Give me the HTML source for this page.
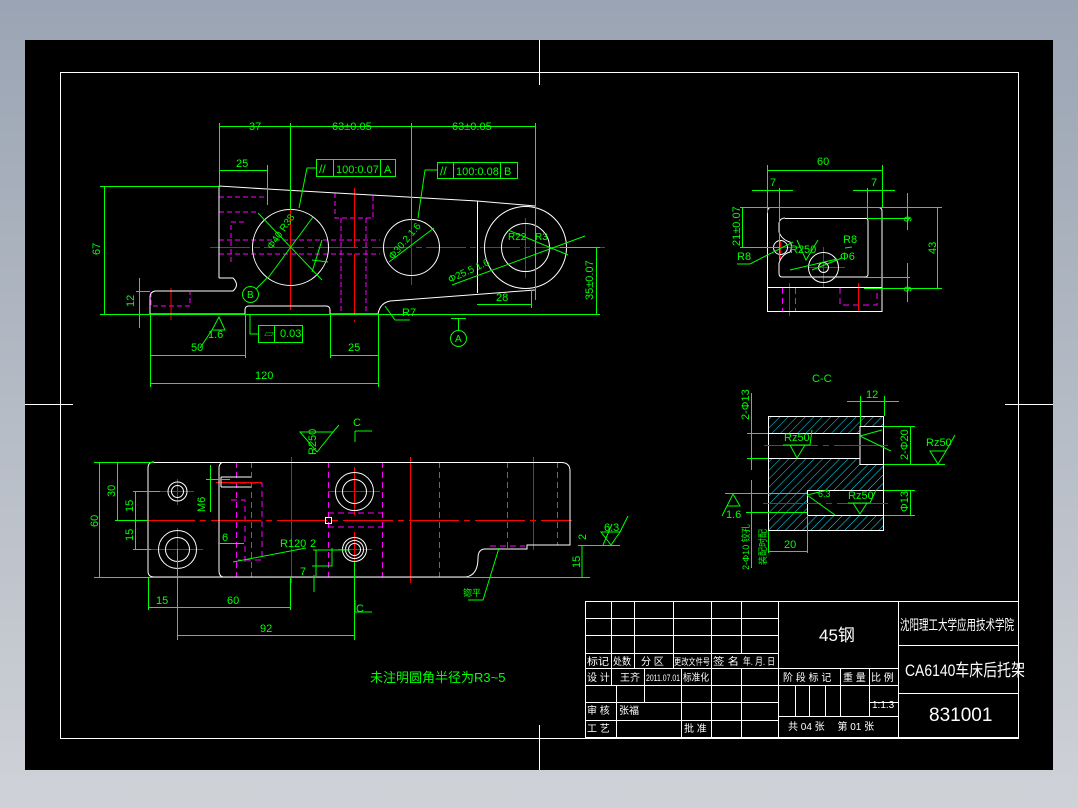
<!DOCTYPE html>
<html><head><meta charset="utf-8"><style>
html,body{margin:0;padding:0;width:1078px;height:808px;overflow:hidden;background:linear-gradient(#9aa4b3,#cfd2d7);}
svg{position:absolute;left:0;top:0}
text{font-family:"Liberation Sans","Noto Sans CJK SC",sans-serif;}
</style></head><body>
<svg width="1078" height="808" viewBox="0 0 1078 808">
<defs>
<pattern id="h" width="6" height="6" patternUnits="userSpaceOnUse" patternTransform="rotate(45)">
<line x1="0" y1="0" x2="0" y2="6" stroke="#00e5ff" stroke-width="1"/>
</pattern>
</defs>
<rect x="25" y="40" width="1028" height="730" fill="#000"/>
<g stroke="#fff" fill="none" stroke-width="1">
<rect x="60.5" y="72.5" width="958" height="666"/>
<line x1="539.5" y1="40" x2="539.5" y2="85"/><line x1="539.5" y1="725" x2="539.5" y2="770"/>
<line x1="25" y1="404.5" x2="73" y2="404.5"/><line x1="1005" y1="404.5" x2="1053" y2="404.5"/>
</g>

<!-- FRONT VIEW -->
<g fill="none" stroke-width="1">
<g stroke="#ff00ff" stroke-dasharray="5,3">
<line x1="219" y1="197" x2="267" y2="197"/><line x1="219" y1="212" x2="258" y2="212"/>
<path d="M231 262 V222 H244"/><line x1="219" y1="240" x2="380" y2="240"/><line x1="219" y1="254" x2="380" y2="254"/>
<path d="M335 193 V218 H373 V193"/><line x1="341" y1="218" x2="341" y2="314"/><line x1="366" y1="218" x2="366" y2="314"/>
<path d="M151 292 V306 H190 V292"/>
</g>
<g stroke="#ff0000">
<line x1="210" y1="247.5" x2="605" y2="247.5" stroke-dasharray="40,4,6,4"/>
<line x1="290.5" y1="210" x2="290.5" y2="310"/><line x1="354.5" y1="188" x2="354.5" y2="322" stroke-dasharray="60,6"/>
<line x1="411.5" y1="215" x2="411.5" y2="285"/><line x1="525.5" y1="218" x2="525.5" y2="278"/>
<line x1="171" y1="288" x2="171" y2="320"/>
</g>
<g stroke="#fff">
<path d="M219 278 V186 L267 189 L477 201 L535 206"/>
<path d="M219 278 H233 Q240 285 233 291 H155 Q150 292 150 297 V314 H245 V310 Q245 306 249 306 H326 Q330 306 330 310 V314 H378 Q380 303 390 301 L535 290"/>
<line x1="477.5" y1="201" x2="477.5" y2="293"/>
<circle cx="290.5" cy="247.5" r="38"/><circle cx="411.5" cy="247.5" r="28"/>
<circle cx="525.5" cy="247.5" r="41"/><circle cx="525.5" cy="247.5" r="24"/>
</g>
<g stroke="#00ff00">
<line x1="219.5" y1="123" x2="219.5" y2="186"/><line x1="290.5" y1="123" x2="290.5" y2="210"/><line x1="411.5" y1="123" x2="411.5" y2="220"/><line x1="535.5" y1="123" x2="535.5" y2="300"/>
<line x1="219" y1="126.5" x2="535" y2="126.5"/>
<line x1="219" y1="170.5" x2="267" y2="170.5"/><line x1="267.5" y1="165" x2="267.5" y2="205"/>
<line x1="100" y1="186.5" x2="219" y2="186.5"/><line x1="100" y1="314.5" x2="600" y2="314.5"/>
<line x1="104.5" y1="186" x2="104.5" y2="314"/>
<line x1="139.5" y1="278" x2="139.5" y2="328"/><line x1="136" y1="291.5" x2="150" y2="291.5"/>
<line x1="560" y1="247.5" x2="600" y2="247.5"/><line x1="596.5" y1="247" x2="596.5" y2="314"/>
<line x1="477" y1="304.5" x2="531" y2="304.5"/><line x1="531.5" y1="290" x2="531.5" y2="308"/>
<line x1="150.5" y1="314" x2="150.5" y2="387"/><line x1="245.5" y1="314" x2="245.5" y2="358"/><line x1="330.5" y1="314" x2="330.5" y2="358"/><line x1="378.5" y1="314" x2="378.5" y2="387"/>
<line x1="150" y1="355.5" x2="245" y2="355.5"/><line x1="330" y1="355.5" x2="378" y2="355.5"/><line x1="150" y1="383.5" x2="378" y2="383.5"/>
<path d="M212 330 L219 317 L225 330 Z M212 330 L200 348"/>
<rect x="316.5" y="159.5" width="79" height="17"/><line x1="333.5" y1="160" x2="333.5" y2="176"/><line x1="380.5" y1="160" x2="380.5" y2="176"/>
<path d="M316 168 H307 L299 208"/>
<rect x="437.5" y="162.5" width="80" height="16"/><line x1="453.5" y1="163" x2="453.5" y2="178"/><line x1="500.5" y1="163" x2="500.5" y2="178"/>
<path d="M437 170 H425 L418 218"/>
<rect x="258.5" y="325.5" width="44" height="17"/><line x1="274.5" y1="326" x2="274.5" y2="342"/><path d="M258 334 H250 V314"/>
<circle cx="458.5" cy="338.5" r="8"/><line x1="458.5" y1="330" x2="458.5" y2="318"/><line x1="451" y1="318.5" x2="466" y2="318.5"/>
<circle cx="250.5" cy="294.5" r="8"/><line x1="256" y1="289" x2="268" y2="277"/>
<line x1="258" y1="213" x2="322" y2="280"/><line x1="268" y1="278" x2="313" y2="217"/>
<line x1="389" y1="262" x2="434" y2="228"/><line x1="452" y1="285" x2="585" y2="236"/><line x1="508" y1="230" x2="568" y2="255"/>
<path d="M385 306 L395 320 H410"/><line x1="312" y1="272" x2="322" y2="240"/>
<line x1="312" y1="260" x2="328" y2="262"/>
</g>
<g fill="#00ff00" font-size="11" stroke="none">
<text x="249" y="130">37</text><text x="332" y="130">63±0.05</text><text x="452" y="130">63±0.05</text>
<text x="236" y="167">25</text><text x="319" y="173" font-size="12">//</text><text x="336" y="173">100:0.07</text><text x="384" y="173">A</text>
<text x="440" y="175" font-size="12">//</text><text x="456" y="175">100:0.08</text><text x="504" y="175">B</text>
<text x="280" y="337">0.03</text><text x="264" y="338" font-size="10">▱</text>
<text x="455" y="342" font-size="10">A</text><text x="247" y="298" font-size="10">B</text>
<text x="100" y="255" transform="rotate(-90 100 255)">67</text><text x="134" y="307" transform="rotate(-90 134 307)">12</text>
<text x="593" y="300" transform="rotate(-90 593 300)">35±0.07</text>
<text x="496" y="301">28</text><text x="191" y="351">50</text><text x="208" y="338">1.6</text><text x="348" y="351">25</text><text x="255" y="379">120</text>
<text x="402" y="316">R7</text>
<text x="272" y="250" font-size="10" transform="rotate(-55 272 250)">Φ40 R38</text>
<text x="393" y="260" font-size="10" transform="rotate(-50 393 260)">Φ30.2 1.6</text>
<text x="450" y="283" font-size="10" transform="rotate(-25 450 283)">Φ25.5 1.6</text>
<text x="508" y="240" font-size="10">R22</text><text x="535" y="240" font-size="10">R3</text>
</g>
</g>

<!-- TOP VIEW -->
<g fill="none" stroke-width="1">
<g stroke="#ff00ff" stroke-dasharray="6,4">
<line x1="236.5" y1="462" x2="236.5" y2="577"/><line x1="251.5" y1="462" x2="251.5" y2="577"/>
<path d="M230 483 H262 V560 H238"/><path d="M231 500 H245 V565"/>
<line x1="328.5" y1="462" x2="328.5" y2="577"/><line x1="382.5" y1="462" x2="382.5" y2="577"/><line x1="328" y1="513" x2="382" y2="513"/><line x1="328" y1="527" x2="382" y2="527"/>
<line x1="439.5" y1="462" x2="439.5" y2="577"/><line x1="507.5" y1="462" x2="507.5" y2="550"/><line x1="557.5" y1="462" x2="557.5" y2="545"/>
<line x1="490" y1="546" x2="525" y2="546"/>
</g>
<g stroke="#ff0000">
<line x1="145" y1="520.5" x2="572" y2="520.5" stroke-dasharray="50,5,6,5"/>
<line x1="291.5" y1="457" x2="291.5" y2="583"/><line x1="410.5" y1="457" x2="410.5" y2="583"/><line x1="533.5" y1="457" x2="533.5" y2="550"/>
<line x1="160" y1="491.5" x2="194" y2="491.5"/><line x1="177.5" y1="479" x2="177.5" y2="505"/>
<line x1="151" y1="549.5" x2="203" y2="549.5"/><line x1="177.5" y1="528" x2="177.5" y2="572"/>
<line x1="328" y1="491.5" x2="380" y2="491.5"/><line x1="354.5" y1="467" x2="354.5" y2="515"/>
<line x1="338" y1="549.5" x2="372" y2="549.5"/><line x1="354.5" y1="532" x2="354.5" y2="565"/>
<line x1="216" y1="482.5" x2="262" y2="482.5"/>
</g>
<g stroke="#fff">
<path d="M154 462.5 H562 Q570 463 570 471 V545 H527 V549 H484 Q478 550 478 558 Q478 575 466 577 H154 Q148 577 148 571 V468 Q148 462 154 462"/>
<path d="M222 462.5 Q219 464 219 468 V571 Q219 576 223 577"/>
<circle cx="177.5" cy="491.5" r="9.5"/><circle cx="177.5" cy="491.5" r="6"/>
<circle cx="177.5" cy="549.5" r="19"/><circle cx="177.5" cy="549.5" r="12"/>
<circle cx="354.5" cy="491.5" r="19"/><circle cx="354.5" cy="491.5" r="12"/>
<circle cx="354.5" cy="549.5" r="12"/><circle cx="354.5" cy="549.5" r="9"/><circle cx="354.5" cy="549.5" r="6"/>
<path d="M221 477 H251 M221 487 H251 M221 477 V487"/><rect x="325.5" y="517.5" width="6" height="6"/>
</g>
<g stroke="#00ff00">
<line x1="94" y1="462.5" x2="154" y2="462.5"/><line x1="94" y1="577.5" x2="590" y2="577.5"/>
<line x1="99.5" y1="462" x2="99.5" y2="577"/><line x1="117.5" y1="462" x2="117.5" y2="520"/><line x1="115" y1="520.5" x2="148" y2="520.5"/>
<line x1="135.5" y1="491" x2="135.5" y2="549"/><line x1="133" y1="491.5" x2="160" y2="491.5"/><line x1="133" y1="549.5" x2="151" y2="549.5"/>
<line x1="148.5" y1="577" x2="148.5" y2="610"/><line x1="177.5" y1="549" x2="177.5" y2="640"/><line x1="290.5" y1="577" x2="290.5" y2="610"/><line x1="354.5" y1="562" x2="354.5" y2="640"/>
<line x1="148" y1="607.5" x2="290" y2="607.5"/><line x1="177" y1="635.5" x2="354" y2="635.5"/>
<line x1="210.5" y1="465" x2="210.5" y2="512"/><line x1="206" y1="479.5" x2="230" y2="479.5"/>
<line x1="218" y1="543.5" x2="244" y2="543.5"/><line x1="233" y1="562" x2="306" y2="548"/>
<path d="M316 550 V576 M312 566 H332 V548 M313 550 H350"/><line x1="314" y1="575" x2="314" y2="592"/>
<path d="M355 431 H372 M355 431 V442 M355 600 V612 H372"/>
<path d="M300 432 L333 432 L317 452 Z M333 432 L339 425"/>
<path d="M582 545 V577 M578 545.5 H620"/><path d="M603 545 L612 524 M601 532 H620 L611 545 Z M620 532 L628 516"/>
<path d="M499 548 L483 600 H468"/>
</g>
<g fill="#00ff00" font-size="11">
<text x="98" y="527" transform="rotate(-90 98 527)">60</text><text x="115" y="497" transform="rotate(-90 115 497)">30</text>
<text x="133" y="512" transform="rotate(-90 133 512)">15</text><text x="133" y="541" transform="rotate(-90 133 541)">15</text>
<text x="205" y="512" transform="rotate(-90 205 512)">M6</text><text x="222" y="541">6</text>
<text x="156" y="604">15</text><text x="227" y="604">60</text><text x="260" y="632">92</text>
<text x="280" y="547">R120</text><text x="310" y="547">2</text><text x="300" y="575">7</text>
<text x="316" y="455" transform="rotate(-90 316 455)">R250</text>
<text x="353" y="426">C</text><text x="356" y="612">C</text>
<text x="586" y="540" transform="rotate(-90 586 540)">2</text><text x="580" y="568" transform="rotate(-90 580 568)">15</text>
<text x="604" y="531">6.3</text><text x="463" y="596" font-size="9">锪平</text>
<text x="370" y="682" font-size="13">未注明圆角半径为R3~5</text>
</g>
</g>

<!-- SIDE VIEW -->
<g fill="none" stroke-width="1">
<g stroke="#ff00ff" stroke-dasharray="6,4">
<line x1="782.5" y1="288" x2="782.5" y2="311"/><line x1="795.5" y1="288" x2="795.5" y2="311"/>
<path d="M840 288 V305 H877 V288"/>
</g>
<g stroke="#ff0000">
<line x1="760" y1="247.5" x2="800" y2="247.5"/><line x1="780.5" y1="240" x2="780.5" y2="260"/>
<line x1="808" y1="267.5" x2="845" y2="267.5"/><line x1="823.5" y1="247" x2="823.5" y2="288"/>
<line x1="789.5" y1="283" x2="789.5" y2="316"/><line x1="858.5" y1="283" x2="858.5" y2="311"/>
</g>
<g stroke="#fff">
<path d="M770 207.5 H879 Q882 208 882 211 V311.5 H767.5 V211 Q768 208 770 207.5"/>
<line x1="767" y1="287.5" x2="882" y2="287.5"/>
<path d="M785 218.5 H865 Q868 218 868 221 V274 Q868 277 865 277 H782 Q779 277 779 273 V263 Q782 254 790 252 Q793 246 790 242 Q782 240 779 232 V223 Q780 218 785 218"/>
<circle cx="780.5" cy="247.5" r="7"/><circle cx="823.5" cy="267.5" r="15"/><circle cx="823.5" cy="267.5" r="5"/>
</g>
<g stroke="#00ff00">
<line x1="767.5" y1="165" x2="767.5" y2="213"/><line x1="882.5" y1="165" x2="882.5" y2="207"/><line x1="767" y1="170.5" x2="882" y2="170.5"/>
<line x1="752" y1="190.5" x2="793" y2="190.5"/><line x1="779.5" y1="188" x2="779.5" y2="260"/>
<line x1="853" y1="190.5" x2="895" y2="190.5"/><line x1="867.5" y1="188" x2="867.5" y2="218"/>
<line x1="740" y1="207.5" x2="942" y2="207.5"/><line x1="864" y1="288.5" x2="942" y2="288.5"/>
<line x1="937.5" y1="207" x2="937.5" y2="288"/><line x1="742.5" y1="207" x2="742.5" y2="247"/><line x1="740" y1="247.5" x2="780" y2="247.5"/>
<line x1="907.5" y1="193" x2="907.5" y2="230"/><line x1="867" y1="218.5" x2="910" y2="218.5"/>
<line x1="907.5" y1="263" x2="907.5" y2="302"/><line x1="864" y1="277.5" x2="910" y2="277.5"/>
<path d="M737 264 H750 L793 242"/><path d="M797 240 L806 260 L818 240 M790 270 L837 259 M845 248 L852 247 M812 270 L842 258"/>
</g>
<g fill="#00ff00" font-size="11">
<text x="817" y="165">60</text><text x="770" y="186">7</text><text x="871" y="186">7</text>
<text x="740" y="246" transform="rotate(-90 740 246)">21±0.07</text><text x="936" y="254" transform="rotate(-90 936 254)">43</text>
<text x="904" y="216" transform="rotate(90 904 216)">6</text><text x="904" y="286" transform="rotate(90 904 286)">6</text>
<text x="737" y="260">R8</text><text x="790" y="253">R250</text><text x="843" y="243">R8</text><text x="840" y="260">Φ6</text>
</g>
</g>

<!-- SECTION C-C -->
<g fill="none" stroke-width="1">
<rect x="768" y="416" width="116" height="115" fill="url(#h)"/>
<rect x="768" y="433" width="116" height="25" fill="#000"/><rect x="860" y="426" width="24" height="38" fill="#000"/>
<rect x="807" y="490" width="77" height="25" fill="#000"/>
<g stroke="#fff">
<rect x="768.5" y="416.5" width="115" height="114"/>
<path d="M768 433.5 H860 V426.5 H884 M768 458.5 H860 V464.5 H884 M860 426 V464"/>
<path d="M807.5 490 V515 M807 490.5 H884 M807 515.5 H884"/>
</g>
<g stroke="#ff0000"><line x1="764" y1="445.5" x2="888" y2="445.5" stroke-dasharray="54,5,6,5"/><line x1="763" y1="503.5" x2="888" y2="503.5" stroke-dasharray="58,5,6,5"/></g>
<g stroke="#00ff00">
<line x1="747" y1="433.5" x2="768" y2="433.5"/><line x1="747" y1="458.5" x2="768" y2="458.5"/><line x1="751.5" y1="393" x2="751.5" y2="470"/>
<line x1="860.5" y1="396" x2="860.5" y2="426"/><line x1="884.5" y1="396" x2="884.5" y2="416"/><line x1="847" y1="401.5" x2="899" y2="401.5"/>
<line x1="884" y1="426.5" x2="915" y2="426.5"/><line x1="884" y1="464.5" x2="945" y2="464.5"/><line x1="910.5" y1="426" x2="910.5" y2="464"/>
<line x1="884" y1="490.5" x2="915" y2="490.5"/><line x1="884" y1="515.5" x2="915" y2="515.5"/><line x1="910.5" y1="490" x2="910.5" y2="515"/>
<line x1="725" y1="493.5" x2="807" y2="493.5"/><line x1="746" y1="512.5" x2="807" y2="512.5"/><line x1="751.5" y1="480" x2="751.5" y2="568"/>
<line x1="768.5" y1="531" x2="768.5" y2="553"/><line x1="807.5" y1="515" x2="807.5" y2="553"/><line x1="768" y1="551.5" x2="807" y2="551.5"/>
<path d="M790 445 L797 458 L805 445 M783 445 H810 L812 430"/><path d="M853 503 L860 514 L867 503 M848 503 H870 L876 490"/>
<path d="M930 451 L938 464 L946 451 Z M946 451 L955 435"/><path d="M727 506 L733 494 L740 506 Z M727 506 L722 516"/>
<path d="M860 436 L891 451 M860 436 L882 430 M807 495 L835 515 M807 495 L828 490"/>
</g>
<g fill="#00ff00" font-size="11">
<text x="812" y="382">C-C</text><text x="866" y="398">12</text>
<text x="749" y="420" transform="rotate(-90 749 420)">2-Φ13</text><text x="908" y="460" transform="rotate(-90 908 460)">2-Φ20</text>
<text x="908" y="512" transform="rotate(-90 908 512)">Φ13</text><text x="784" y="441">Rz50</text><text x="848" y="499">Rz50</text>
<text x="926" y="446">Rz50</text><text x="726" y="518">1.6</text><text x="784" y="548">20</text>
<text x="749" y="570" font-size="9" transform="rotate(-90 749 570)">2-Φ10 铰孔</text><text x="766" y="565" font-size="9" transform="rotate(-90 766 565)">装配时配</text>
<text x="818" y="497" font-size="9">6.3</text>
</g>
</g>

<!-- TITLE BLOCK -->
<g stroke="#fff" fill="none" stroke-width="1">
<rect x="585.5" y="601.5" width="433" height="136"/>
<line x1="778.5" y1="601" x2="778.5" y2="737"/><line x1="898.5" y1="601" x2="898.5" y2="737"/>
<path d="M585 618.5 H778 M585 635.5 H778 M585 653.5 H778 M585 668.5 H898 M585 685.5 H898 M585 702.5 H778 M585 720.5 H778 M778 716.5 H898 M898 645.5 H1019 M898 693.5 H1019"/>
<path d="M611.5 601 V653 M634.5 601 V653 M673.5 601 V653 M711.5 601 V653 M741.5 601 V653"/>
<path d="M611.5 668 V685 M616.5 685 V737 M644.5 668 V702 M681.5 668 V737 M711.5 668 V737 M741.5 668 V737 M611.5 653 V668 M634.5 653 V668 M673.5 653 V668 M711.5 653 V668"/>
<path d="M840.5 668 V716 M869.5 668 V716 M795.5 685 V716 M809.5 685 V716 M825.5 685 V716 M869 702.5 H898"/>
</g>
<g fill="#fff" font-size="10">
<text x="587" y="665" textLength="22" lengthAdjust="spacingAndGlyphs">标记</text><text x="613" y="665" textLength="18" lengthAdjust="spacingAndGlyphs">处数</text><text x="641" y="665">分 区</text><text x="674" y="665" font-size="9" textLength="36" lengthAdjust="spacingAndGlyphs">更改文件号</text><text x="713" y="665" textLength="26" lengthAdjust="spacingAndGlyphs">签 名</text><text x="743" y="665" textLength="32" lengthAdjust="spacingAndGlyphs">年. 月. 日</text>
<text x="587" y="681">设 计</text><text x="620" y="681">王齐</text><text x="646" y="681" font-size="9" textLength="34" lengthAdjust="spacingAndGlyphs">2011.07.01</text><text x="683" y="681" textLength="26" lengthAdjust="spacingAndGlyphs">标准化</text>
<text x="587" y="714">审 核</text><text x="619" y="714">张福</text><text x="587" y="732">工 艺</text><text x="684" y="732">批 准</text>
<text x="783" y="681">阶 段 标 记</text><text x="843" y="681">重 量</text><text x="871" y="681">比 例</text>
<text x="872" y="708">1:1.3</text><text x="788" y="730">共 04 张　 第 01 张</text>
<text x="819" y="641" font-size="17">45钢</text>
<text x="900" y="630" font-size="14" textLength="114" lengthAdjust="spacingAndGlyphs">沈阳理工大学应用技术学院</text>
<text x="905" y="676" font-size="17" textLength="120" lengthAdjust="spacingAndGlyphs">CA6140车床后托架</text>
<text x="929" y="721" font-size="19">831001</text>
</g>
</svg>
</body></html>
